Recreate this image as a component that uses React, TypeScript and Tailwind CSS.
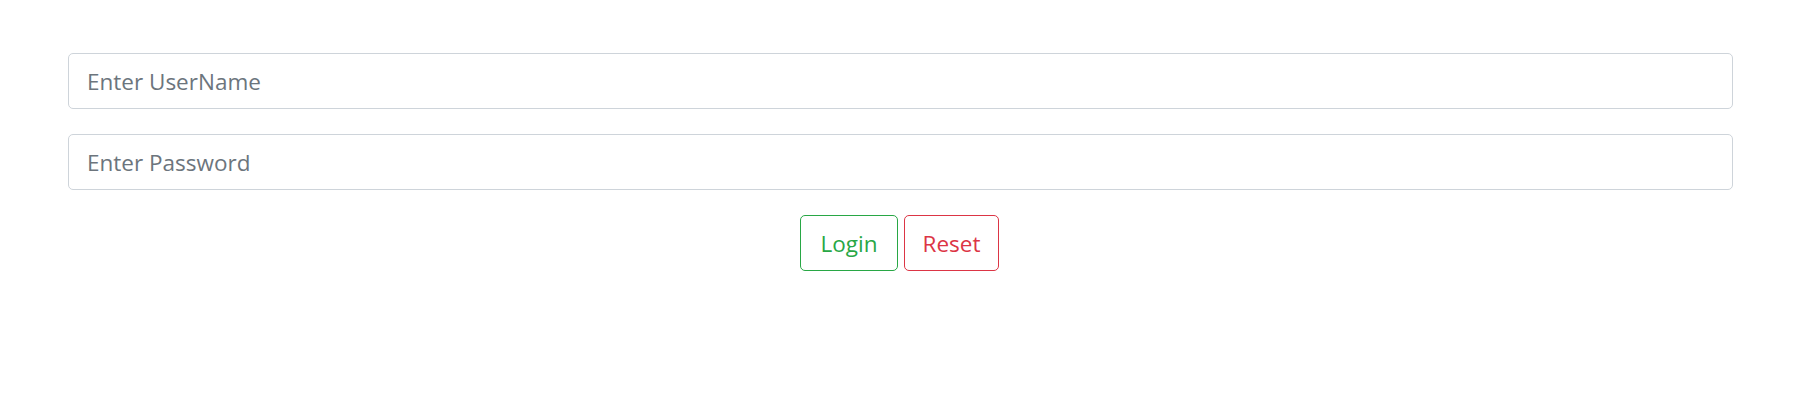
import React, { useState } from 'react';

export default function App() {
  const [form, setForm] = useState({ username: '', password: '' });

  const reset = () => setForm({ username: '', password: '' });

  return (
    <div className="min-h-[418px] bg-white pt-[53px] pl-[68px] pr-[81px] font-['Open_Sans',sans-serif]">
      <form onSubmit={(e) => e.preventDefault()} className="flex flex-col gap-[25px]">
        <input
          type="text"
          value={form.username}
          onChange={(e) => setForm(prev => ({ ...prev, username: e.target.value }))}
          placeholder="Enter UserName"
          className="h-[56px] w-full rounded-[5px] border border-[#ced4da] px-[18px] pt-[1px] text-[22.5px] text-[#495057] placeholder:text-[#6c757d] outline-none"
        />
        <input
          type="password"
          value={form.password}
          onChange={(e) => setForm(prev => ({ ...prev, password: e.target.value }))}
          placeholder="Enter Password"
          className="h-[56px] w-full rounded-[5px] border border-[#ced4da] px-[18px] pt-[1px] text-[22.5px] text-[#495057] placeholder:text-[#6c757d] outline-none"
        />
        <div className="flex justify-center gap-[6px] pr-[2px]">
          <button
            type="submit"
            className="h-[56px] w-[98px] rounded-[5px] border border-[#28a745] pt-[1px] text-[22.5px] text-[#28a745]"
          >
            Login
          </button>
          <button
            type="button"
            onClick={reset}
            className="h-[56px] w-[95px] rounded-[5px] border border-[#dc3545] pt-[1px] text-[22.5px] text-[#dc3545]"
          >
            Reset
          </button>
        </div>
      </form>
    </div>
  );
}
